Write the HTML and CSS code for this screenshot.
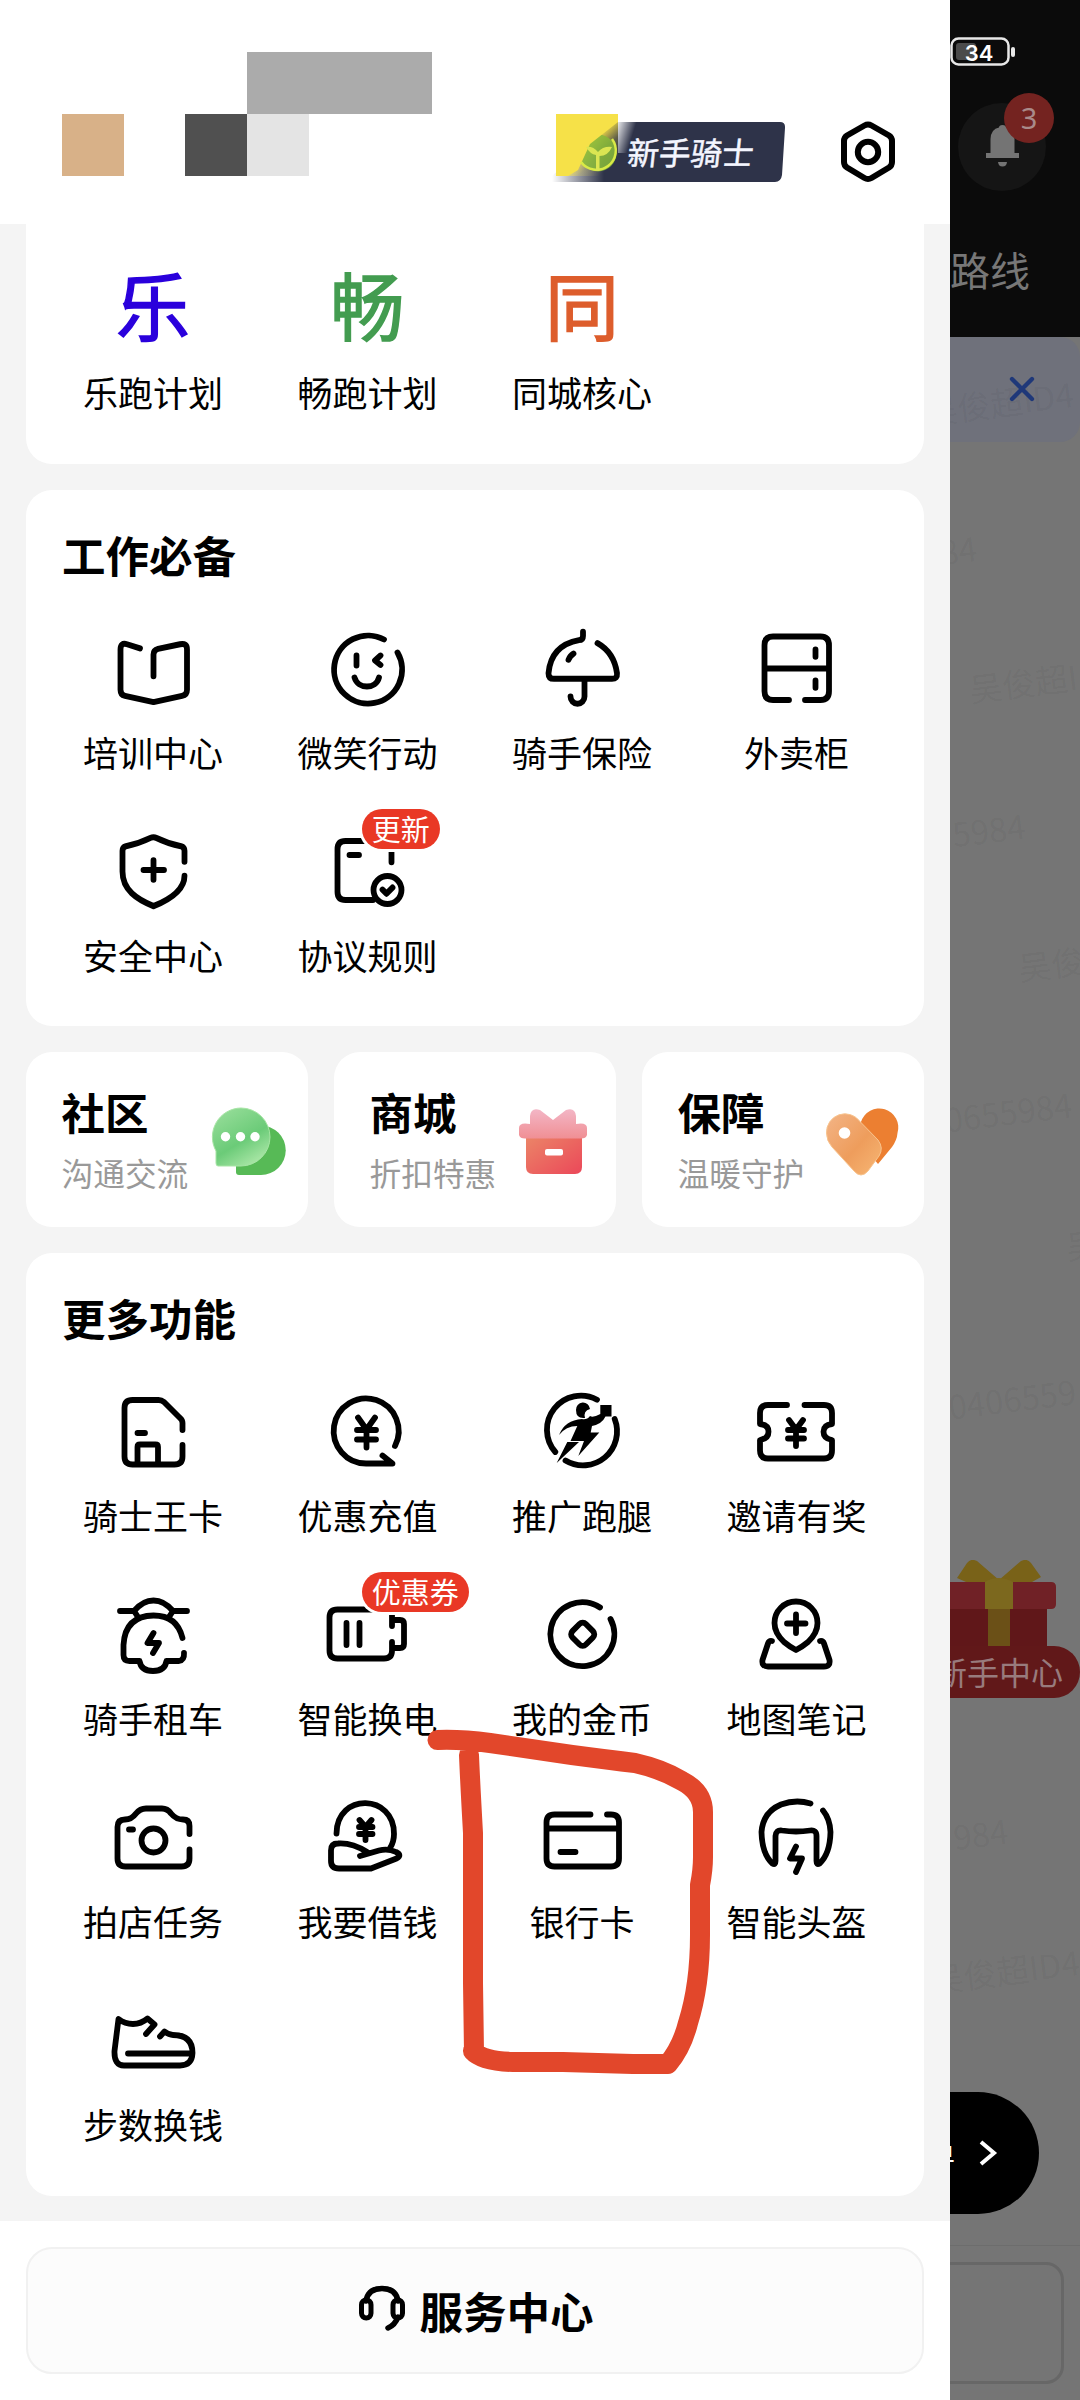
FILE: index.html
```html
<!DOCTYPE html>
<html lang="zh-CN">
<head>
<meta charset="utf-8">
<title>骑手中心</title>
<link rel="stylesheet" href="styles.css">
</head>
<body>
<div class="screen">
  <div class="backdrop">
    <div class="topbar"></div>
    <div class="notice"></div>
    <svg class="battery" viewBox="0 0 80 36" width="80" height="36"><rect x="11.5" y="4.500" width="57" height="26" rx="7" fill="none" stroke="#e8e8e8" stroke-width="2.500"/><rect x="16" y="9" width="20" height="17" rx="3" fill="#4b4b4b"/><rect x="71" y="13" width="4" height="10" rx="2" fill="#e8e8e8"/></svg>
    <span class="battery-level">34</span>
    <div class="bell"><svg viewBox="0 0 88 88" width="88" height="88"><path d="M28 55V50H32.500V36Q33 26 41 24.500Q41 22 44.500 22Q48 22 48 24.500Q56 26 56.500 36V50H61V55Z" fill="#747474"/><path d="M40 59H49Q48.500 63.500 44.500 63.500Q40.500 63.500 40 59Z" fill="#747474"/></svg></div>
    <span class="bell-count">3</span>
    <span class="tab">路线</span>
    <span class="mark m1">吴俊超ID4</span>
    <svg class="close" viewBox="0 0 30 30" width="30" height="30"><path d="M5 5L25 25M25 5L5 25" stroke="#1f3879" stroke-width="4.300" stroke-linecap="round"/></svg>
    <span class="mark m2">84</span>
    <span class="mark m3">吴俊超I</span>
    <span class="mark m4">5984</span>
    <span class="mark m5">吴俊</span>
    <span class="mark m6">0655984</span>
    <span class="mark m7">吴</span>
    <span class="mark m8">0406559</span>
    <span class="mark m9">984</span>
    <span class="mark m10">吴俊超ID4</span>
    <svg class="gift" viewBox="0 0 140 90" width="140" height="90"><rect x="0" y="48" width="107" height="40" fill="#601719"/><path d="M0 22H111Q116 22 116 27V44Q116 49 111 49H0Z" fill="#702126"/><rect x="48" y="48" width="22" height="40" fill="#6b5017"/><path d="M17 18L27 3Q31-2 37 1L59 20L81 1Q87-2 91 3L101 17L92 22H26Z" fill="#796218"/><path d="M45 22Q58 14 73 22V49H45Z" fill="#7c681e"/></svg>
    <div class="gift-label">新手中心</div>
    <div class="order"><span>单</span><svg viewBox="0 0 24 30" width="24" height="30"><path d="M5 4L18 15L5 26" fill="none" stroke="#fff" stroke-width="4"/></svg></div>
    <div class="bottom-line"></div>
    <div class="bottom-box"></div>
  </div>

  <aside class="drawer">
    <header class="header">
      <div class="mosaic tan"></div><div class="mosaic dark"></div><div class="mosaic light"></div><div class="mosaic grey"></div>
      <div class="rank">
        <svg viewBox="0 0 240 80" width="240" height="80">
          <defs>
            <linearGradient id="fade" gradientUnits="userSpaceOnUse" x1="2" y1="74" x2="54" y2="74"><stop offset="0" stop-color="#2e3349" stop-opacity="0"/><stop offset="1" stop-color="#2e3349"/></linearGradient>
            <linearGradient id="sun" x1="0" y1="0" x2="1" y2="1"><stop offset=".5" stop-color="#f6e148"/><stop offset=".68" stop-color="#f6e148" stop-opacity=".25"/><stop offset=".85" stop-color="#f6e148" stop-opacity="0"/></linearGradient>
            <linearGradient id="edge" x1="0" y1="0" x2="1" y2=".5"><stop offset="0" stop-color="#fff"/><stop offset=".7" stop-color="#fff" stop-opacity="0"/></linearGradient>
          </defs>
          <path d="M2 68L60 14H230Q235.500 14 235 20L232 67Q231 74 225 74H2Z" fill="url(#fade)"/>
          <rect x="68" y="7" width="24" height="38" fill="url(#edge)"/>
          <rect x="6" y="6" width="62" height="62" fill="url(#sun)"/>
          <circle cx="48" cy="45" r="18.500" fill="#86b93a" fill-opacity=".85"/>
          <path d="M6 6H68V14L40 36L28 62L18 68H6Z" fill="#f6e148"/>
          <path d="M62 31A19 19 0 1 1 31 54" fill="none" stroke="#d9ea46" stroke-width="2.500"/>
          <path d="M46 63V47Q40 46 36 39Q43 38 48 44Q53 38 62 39Q58 48 49.500 48V63Z" fill="#dbe552"/>
        </svg>
        <span>新手骑士</span>
      </div>
      <svg class="gear" viewBox="0 0 60 66" width="60" height="66"><path d="M26.500 6.500Q30 4.500 33.500 6.500L51 16.500Q54 18.500 54 22V43Q54 46.500 51 48.500L33.500 59Q30 61 26.500 59L9 48.500Q6 46.500 6 43V22Q6 18.500 9 16.500Z" fill="none" stroke="#000" stroke-width="6"/><circle cx="30" cy="33" r="10.200" fill="none" stroke="#000" stroke-width="6"/></svg>
    </header>

    <main class="content">
      <section class="card plans">
        <div class="grid">
          <div class="cell"><span class="glyph blue">乐</span><span class="label">乐跑计划</span></div>
          <div class="cell"><span class="glyph green">畅</span><span class="label">畅跑计划</span></div>
          <div class="cell"><span class="glyph orange">同</span><span class="label">同城核心</span></div>
        </div>
      </section>

      <section class="card work">
        <h2>工作必备</h2>
        <div class="grid">
          <div class="cell"><svg class="icon" viewBox="0 0 100 100"><path transform="matrix(1 0 0 1.033 0 -4.700)" d="M37 33L24 29Q17.500 27 17.500 34V73Q17.500 78 22 79L50.500 85L79 79Q84 78 84 73V34Q84 27.500 77 29L55 33.500Q50.500 34.500 50.500 39V60"/></svg><span class="label">培训中心</span></div>
          <div class="cell"><svg class="icon" viewBox="0 0 100 100"><path transform="translate(0 -3.500)" d="M67 24A34 34 0 1 0 80.500 37M39.500 40V50M63.500 40L58 45L63.500 49.500M37.500 62C41 74 59 74 62 62"/></svg><span class="label">微笑行动</span></div>
          <div class="cell"><svg class="icon" viewBox="0 0 100 100"><path transform="matrix(1 0 0 1.033 0 -4.700)" d="M51 17V21Q51 25 47 25Q19 30 16.500 57Q16.500 62.500 22 62.500H80Q85.500 62.500 85 57Q82 37 65.500 28M52.500 63V79.500A7 7 0 0 1 38.500 79.500M41.500 38Q38 40 36.500 44"/></svg><span class="label">骑手保险</span></div>
          <div class="cell"><svg class="icon" viewBox="0 0 100 100"><path transform="matrix(1 0 0 1.033 0 -4.700)" d="M43 83H27Q18.500 83 18.500 74.500V30Q18.500 21.500 27 21.500H74.500Q83 21.500 83 30V74.500Q83 83 74.500 83H59M19 52.500H83M69.500 34V41M69.500 64V71"/></svg><span class="label">外卖柜</span></div>
          <div class="cell"><svg class="icon" viewBox="0 0 100 100"><path transform="matrix(1 0 0 1.033 0 2)" d="M81.500 36.500V26Q81.500 22.500 78 21.500Q65 19 53.500 13.500Q50.500 12 47.500 13.500Q36 19 23 21.500Q19.500 22.500 19.500 26V46C19.500 64 34 73 50.500 79.500C67 73 81.500 64 81.500 50M40.500 44.500H61M50.500 35V54"/></svg><span class="label">安全中心</span></div>
          <div class="cell"><svg class="icon" viewBox="0 0 100 100"><path transform="matrix(1 0 0 1.033 0 2)" d="M50 16.500H28.500Q20.500 16.500 20.500 24.500V65.500Q20.500 73.500 28.500 73.500H56M74.500 20V37M32.500 30H42M65.500 63.500L69.500 67.500L75.500 61.500"/><circle cx="70.500" cy="68" r="14"/></svg><span class="label">协议规则</span><span class="tag">更新</span></div>
        </div>
      </section>

      <div class="trio">
        <section class="card mini">
          <div><h2>社区</h2><p>沟通交流</p></div>
          <svg viewBox="0 0 80 80" width="80" height="80"><defs><linearGradient id="g1" x1="0" y1="0" x2=".6" y2="1"><stop offset="0" stop-color="#9de09e"/><stop offset=".65" stop-color="#6bcb78"/><stop offset="1" stop-color="#a4e4a2"/></linearGradient></defs><path d="M53 23.500A24.700 24.700 0 0 1 53 73H31Q28 73 28 70V48A25 25 0 0 1 53 23.500Z" fill="#57ba56"/><path d="M33 6A29 29 0 0 1 33 64H10Q8 64 8 61V49A29 29 0 0 1 33 6Z" fill="url(#g1)" stroke="#a7e5a5"/><circle cx="17.500" cy="34.700" r="4.700" fill="#fff"/><circle cx="32.500" cy="34.700" r="4.700" fill="#fff"/><circle cx="47" cy="34.700" r="4.700" fill="#fff"/></svg>
        </section>
        <section class="card mini">
          <div><h2>商城</h2><p>折扣特惠</p></div>
          <svg viewBox="0 0 80 80" width="80" height="80"><defs><linearGradient id="g2" x1="0" y1="0" x2="1" y2="1"><stop offset="0" stop-color="#eb8768"/><stop offset="1" stop-color="#eb4859"/></linearGradient><linearGradient id="g3" x1="0" y1="0" x2="0" y2="1"><stop offset="0" stop-color="#f3b6c6"/><stop offset="1" stop-color="#f08f94"/></linearGradient></defs><path d="M10 32H66V65Q66 72 59 72H17Q10 72 10 65Z" fill="url(#g2)"/><path d="M14 22V14Q15 5 24 8L37 18L50 8Q59 5 60 14V22Q71 20 71 26V33Q70 36.500 65 36.500H9Q4 36.500 3 33V26Q3 20 14 22Z" fill="url(#g3)"/><rect x="29" y="47" width="18" height="6.500" rx="2" fill="#fff"/></svg>
        </section>
        <section class="card mini">
          <div><h2>保障</h2><p>温暖守护</p></div>
          <svg viewBox="0 0 80 80" width="80" height="80"><defs><linearGradient id="g4" x1="0" y1="0" x2="1" y2="1"><stop offset="0" stop-color="#f3b486"/><stop offset=".55" stop-color="#ee9d5c"/><stop offset="1" stop-color="#f7b775"/></linearGradient></defs><path d="M37 20A18.500 18.500 0 0 1 73.500 31Q73 38 68 45L54 62L40 45Z" fill="#ec7f31"/><path d="M2.500 31A18.500 18.500 0 0 1 36 19.500L54 38Q60 46 55 54L44 69Q37 77 30 69L8 45Q2.500 39 2.500 31Z" fill="url(#g4)" stroke="#f8c48e"/><circle cx="20.500" cy="31" r="5.800" fill="#fff"/></svg>
        </section>
      </div>

      <section class="card more">
        <h2>更多功能</h2>
        <div class="grid">
          <div class="cell"><svg class="icon" viewBox="0 0 100 100"><path d="M79.500 48V41Q79.500 38 77 36L61 20Q58.500 18 55.500 18H29.500Q21.500 18 21.500 26V74.500Q21.500 82.500 29.500 82.500H71.500Q79.500 82.500 79.500 74.500V63M34.500 51H42M34.500 81V65Q34.500 62.500 37 62.500H52.500Q55 62.500 55 65V81"/></svg><span class="label">骑士王卡</span></div>
          <div class="cell"><svg class="icon" viewBox="0 0 100 100"><path d="M78 64A32.500 32.500 0 1 0 49.500 81.500H75.500L65.500 73.500M41 35.500L49.500 47.500L58 35.500M49.500 47.500V65.500M40 48H59M40 57.500H59"/></svg><span class="label">优惠充值</span></div>
          <div class="cell"><svg class="icon" viewBox="0 0 100 100"><path d="M65 17.700A34 34 0 0 0 23.300 70M82.700 37A34 34 0 0 1 33.500 78.500"/><path class="solid" d="M44 28A7 7 0 0 1 58 27Q51 29 53 36Q44 37 44 28ZM68.300 23H79.500V34.500H73.500Q70 42 60 44L58.700 50.500H67.300L46.300 74L52 59H38.500L45.300 44Q34 44 27 53Q33 38 50 37Q55 38 58 34Q61 36 68.300 32ZM35.300 60H47L24.700 81Z"/></svg><span class="label">推广跑腿</span></div>
          <div class="cell"><svg class="icon" viewBox="0 0 100 100"><path d="M41 23H22Q14 23 14 31V42Q22.500 43 22.500 49.700Q22.500 56.500 14 58V68.500Q14 76.500 22 76.500H78Q86 76.500 86 68.500V58Q77.500 56.500 77.500 49.700Q77.500 43 86 42V31Q86 23 78 23H58.500M43 38L50 47.500L57 38M50 47.500V64M42 48H58M42 56.500H58"/></svg><span class="label">邀请有奖</span></div>
          <div class="cell"><svg class="icon" viewBox="0 0 100 100"><path d="M17 26H31Q40 15.500 50.500 15.500Q61 15.500 70 26H84M31 26L36 33.500M70 26L65 33.500M79.500 53Q74 30.500 50.500 30.500Q22 31 20.500 60V70Q20.500 76 26.500 76H36.500Q38 86 50 86Q62 86 63.500 76H76Q81.500 75 81 68M50.500 48L44.500 58H56L50 68"/></svg><span class="label">骑手租车</span></div>
          <div class="cell"><svg class="icon" viewBox="0 0 100 100"><path d="M60 24.500H20.500Q12.500 24.500 12.500 32.500V65.500Q12.500 73.500 20.500 73.500H67Q75 73.500 75 65.500V57M75 30V41M29.500 38V60M42.500 38V60M75 35H83Q87 35 87 39V59Q87 63 83 63H75"/></svg><span class="label">智能换电</span><span class="tag">优惠券</span></div>
          <div class="cell"><svg class="icon" viewBox="0 0 100 100"><path d="M68 22.500A32 32 0 1 0 78.500 34"/><rect x="41.200" y="39.800" width="19" height="19" rx="4.500" transform="rotate(45 50.700 49.300)"/></svg><span class="label">我的金币</span></div>
          <div class="cell"><svg class="icon" viewBox="0 0 100 100"><path d="M50 65Q44 62 38 57Q28.500 48 28.500 38A21.500 21.500 0 0 1 71.500 38Q71.500 48 62 57Q56 62 50 65ZM41 38.500H59.500M50 29.500V48M26 56Q23 55.500 22 58.500L16.500 75Q15.500 81.500 22 81.500H78Q84.500 81.500 83.500 75L78 58.500Q77 55.500 74 56"/></svg><span class="label">地图笔记</span></div>
          <div class="cell"><svg class="icon" viewBox="0 0 100 100"><path d="M86.500 46V38Q86.500 31.500 80 31.500Q73 31.500 68 25.500Q64.500 20.500 59 20.500H43Q37 20.500 33 25.500Q28.500 31.500 22 31.500Q14.500 31.500 14.500 39V70.500Q14.500 78.500 22.500 78.500H78.500Q86.500 78.500 86.500 70.500V61.500M26 41.500H30"/><circle cx="50.500" cy="52.500" r="12"/></svg><span class="label">拍店任务</span></div>
          <div class="cell"><svg class="icon" viewBox="0 0 100 100"><path d="M19.500 45.500C20 4 77.500 6 77 46Q77 54 73 60M42.500 32L48.500 39L54.500 32M48.500 39V52M42 39H55.500M42 46H55.500M43 68L62 62.500Q71 60 79 64Q85.500 67 79.500 70.500L54 80.500H22Q14 80.500 14 73V62.500Q14 55.500 21 55.500Q35 54.500 50 64"/></svg><span class="label">我要借钱</span></div>
          <div class="cell"><svg class="icon" viewBox="0 0 100 100"><path d="M58.500 26.500H22.500Q14.500 26.500 14.500 34.500V70.500Q14.500 78.500 22.500 78.500H79Q87 78.500 87 70.500V34.500Q87 26.500 79 26.500H75M15 40.500H87M28.500 64H43.500"/></svg><span class="label">银行卡</span></div>
          <div class="cell"><svg class="icon" viewBox="0 0 100 100"><path d="M64.500 15.500Q50 11 35 16.500Q17 24 15.500 44Q16 66 26.500 75.500Q29.500 77.500 29.500 73V48Q30 41.500 36 42.500Q50 44.500 64 42.500Q70.500 41.500 70.500 48V73Q70.500 77.500 73.500 75.500Q84 66 84.500 44Q84 31 77 22.500M50 58.500L44 70.500H56L50 84"/></svg><span class="label">智能头盔</span></div>
          <div class="cell"><svg class="icon" viewBox="0 0 100 100"><path d="M43 43L51.500 33.500L44.500 27.500Q38 33 30 33Q22 33 15.500 28L11.500 60Q11 74.500 21 74.500H77Q89 74.500 89.500 62Q89.500 44 70 44Q66 44 61.500 40.500L57 45.500M25 62.500H89"/></svg><span class="label">步数换钱</span></div>
        </div>
      </section>
    </main>

    <footer class="footer">
      <div class="service"><svg viewBox="0 0 50 50" width="50" height="50"><path d="M9 17Q11 4.500 25 4.500Q39 4.500 41 17M41 33Q38 41 31 44" fill="none" stroke="#000" stroke-width="5.500" stroke-linecap="round"/><rect x="4.500" y="16" width="9.500" height="18" rx="4.700" fill="none" stroke="#000" stroke-width="5"/><rect x="36" y="16" width="9.500" height="18" rx="4.700" fill="none" stroke="#000" stroke-width="5"/></svg><span>服务中心</span></div>
    </footer>
  </aside>

  <svg class="scribble" viewBox="0 0 300 370" width="300" height="370"><path d="M17.500 20Q40 19 70 23L152 35Q190 40 215 43Q242 49 262 61Q283 72 283 92V137Q283 150 280 165V215Q280 265 268 303Q262 327 248 344L246 344H213L143 342H93Q62 341 53 331M49 35Q50 60 53 113V263L54 332"/></svg>
</div>
</body>
</html>
```

FILE: styles.css
```css
* { box-sizing: border-box; }
body { margin: 0; font-family: "Noto Sans CJK SC", sans-serif; color: #000; }
h2, p { margin: 0; }
.screen { position: relative; width: 1080px; height: 2400px; overflow: hidden; background: #757575; }

/* Dimmed page behind the drawer */
.backdrop { position: absolute; inset: 0; overflow: hidden; }
.backdrop > * { position: absolute; }
.topbar { left: 0; right: 0; top: 0; height: 337px; background: #0b0b0b; }
.notice { left: 0; right: 0; top: 337px; height: 105px; background: #6f717b; border-radius: 0 20px 20px 0; }
.battery { left: 940px; top: 34px; }
.battery-level { left: 964px; top: 37px; width: 30px; text-align: center; font: 600 22px/32px Inter, sans-serif; color: #fff; }
.bell { left: 958px; top: 103px; width: 88px; height: 88px; border-radius: 50%; background: #151515; }
.bell-count { left: 1004px; top: 93px; width: 50px; height: 50px; border-radius: 50%; background: #742320; color: #a98a89; text-align: center; font: 29px/50px "Noto Sans", sans-serif; }
.tab { left: 950px; top: 239px; font-size: 40px; line-height: 60px; color: #777; }
.close { left: 1007px; top: 374px; }
.mark { font-size: 33px; line-height: 40px; white-space: nowrap; color: rgba(0, 0, 0, .05); transform: rotate(-7deg); }
.m1 { left: 924px; top: 382px; }
.m2 { left: 940px; top: 529px; }
.m3 { left: 969px; top: 662px; }
.m4 { left: 952px; top: 809px; }
.m5 { left: 1018px; top: 943px; }
.m6 { left: 944px; top: 1091px; }
.m7 { left: 1066px; top: 1224px; }
.m8 { left: 948px; top: 1378px; }
.m9 { left: 953px; top: 1813px; }
.m10 { left: 930px; top: 1950px; }
.gift { left: 940px; top: 1560px; }
.gift-label { left: 900px; top: 1646px; width: 180px; height: 52px; padding-left: 35px; border-radius: 26px; background: #611819; color: #987b7d; font-size: 32px; line-height: 50px; white-space: nowrap; }
.order { left: 700px; top: 2092px; width: 339px; height: 122px; border-radius: 61px; background: #000; color: #fff; display: flex; align-items: center; justify-content: flex-end; gap: 21px; padding-right: 39px; font-size: 28px; }
.bottom-line { left: 0; right: 0; top: 2245px; height: 1px; background: #6d6d6d; }
.bottom-box { left: 700px; top: 2262px; width: 364px; height: 122px; border: 3px solid #676767; border-radius: 18px; }

/* Drawer */
.drawer { position: relative; width: 950px; height: 2400px; background: #f4f4f4; display: flex; flex-direction: column; }
.header { position: relative; flex: none; height: 224px; background: #fff; }
.mosaic { position: absolute; top: 114px; width: 62px; height: 62px; }
.tan { left: 62px; background: #d8b188; }
.dark { left: 185px; background: #505050; }
.light { left: 247px; background: #e4e4e4; }
.grey { left: 247px; top: 52px; width: 185px; background: #ababab; }
.rank { position: absolute; left: 550px; top: 108px; width: 240px; height: 80px; }
.rank svg { display: block; }
.rank span { position: absolute; left: 78px; top: 21px; font-size: 31.5px; line-height: 44px; color: #f4f6ff; transform: skewX(-6deg); -webkit-text-stroke: .5px #f4f6ff; white-space: nowrap; }
.gear { position: absolute; left: 838px; top: 119px; }

.content { flex: none; height: 1997px; padding: 0 26px; }
.card { background: #fff; border-radius: 26px; }
.card h2 { font-size: 43.5px; line-height: 60px; font-weight: bold; }
.grid { display: grid; grid-template-columns: repeat(4, 214.5px); grid-auto-rows: 203px; padding-left: 19.7px; }
.cell { position: relative; display: flex; flex-direction: column; align-items: center; }
.icon { width: 100px; height: 100px; overflow: visible; fill: none; stroke: #000; stroke-width: 5.8; stroke-linecap: round; stroke-linejoin: round; }
.icon .solid { fill: #000; stroke: none; }
.label { margin-top: 8px; font-size: 35px; line-height: 50px; white-space: nowrap; }
.tag { position: absolute; left: 101.500px; top: -13px; height: 40px; padding: 0 10px; border-radius: 20px; background: #e93825; color: #fff; font-size: 29px; line-height: 39px; box-shadow: 0 0 0 3px #fff; white-space: nowrap; }
.plans { height: 240px; padding-top: 35px; border-radius: 0 0 26px 26px; }
.glyph { height: 100px; font-size: 74px; line-height: 88px; }
.blue { color: #2a00dc; -webkit-text-stroke: 1.5px #2a00dc; }
.green { color: #439c50; -webkit-text-stroke: 1.5px #439c50; }
.orange { color: #dd5d2c; -webkit-text-stroke: 1.5px #dd5d2c; }
.work { margin-top: 26px; height: 536px; padding-top: 35px; }
.work h2, .more h2 { padding-left: 36px; }
.work h2 { margin-bottom: 34px; }
.trio { display: grid; grid-template-columns: repeat(3, 282px); gap: 26px; margin: 26px 0; }
.mini { height: 175px; display: flex; justify-content: space-between; padding: 30px 20px 0 35.5px; }
.mini p { font-size: 31.7px; line-height: 46px; margin-top: 7px; color: #999; white-space: nowrap; }
.mini svg { flex: none; margin: 20px 0 0 -20px; }
.more { height: 943px; padding-top: 35px; }
.more h2 { margin-bottom: 34px; }

.footer { flex: 1; background: #fff; padding: 26px 26px 0; }
.service { height: 127px; border: 2px solid #f1f1f1; border-radius: 26px; background: #fcfcfc; display: flex; align-items: center; justify-content: center; gap: 13px; font-size: 43.5px; font-weight: bold; }
.service svg { position: relative; top: -2px; }
.service span { line-height: 60px; }

/* Hand-drawn marker ring around the bank card entry */
.scribble { position: absolute; left: 420px; top: 1720px; fill: none; stroke: #e2472b; stroke-width: 20; stroke-linecap: round; stroke-linejoin: round; }
```
